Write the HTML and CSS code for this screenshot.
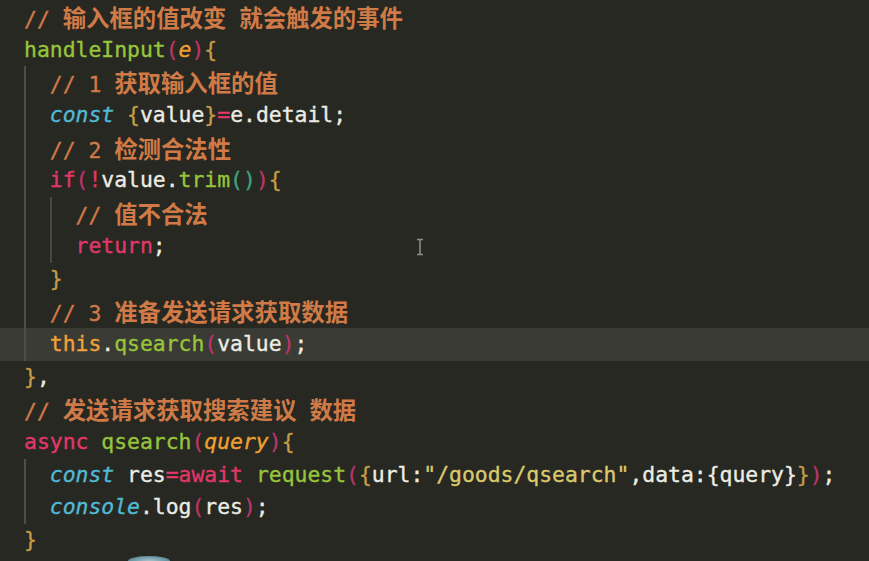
FILE: index.html
```html
<!DOCTYPE html>
<html lang="zh">
<head>
<meta charset="utf-8">
<title>editor</title>
<link rel="stylesheet" href="styles.css">
</head>
<body>
<main class="editor">
  <div class="line"><span class="cm">// <span class="zh">输入框的值改变</span> <span class="zh">就会触发的事件</span></span></div>
  <div class="line"><span class="fn">handleInput</span><span class="pa">(</span><span class="prm">e</span><span class="pa">)</span><span class="br">{</span></div>
  <div class="line g1">  <span class="cm">// 1 <span class="zh">获取输入框的值</span></span></div>
  <div class="line g1">  <span class="st">const</span> <span class="br">{</span><span class="tx">value</span><span class="br">}</span><span class="kw">=</span><span class="tx">e.detail;</span></div>
  <div class="line g1">  <span class="cm">// 2 <span class="zh">检测合法性</span></span></div>
  <div class="line g1">  <span class="kw">if</span><span class="pa">(</span><span class="kw">!</span><span class="tx">value.</span><span class="fn">trim</span><span class="pt">()</span><span class="pa">)</span><span class="br">{</span></div>
  <div class="line g1 g2">    <span class="cm">// <span class="zh">值不合法</span></span></div>
  <div class="line g1 g2">    <span class="kw">return</span><span class="tx">;</span></div>
  <div class="line g1">  <span class="br">}</span></div>
  <div class="line g1">  <span class="cm">// 3 <span class="zh">准备发送请求获取数据</span></span></div>
  <div class="line g1 active">  <span class="th">this</span><span class="tx">.</span><span class="fn">qsearch</span><span class="pa">(</span><span class="tx">value</span><span class="pa">)</span><span class="tx">;</span></div>
  <div class="line"><span class="br">}</span><span class="tx">,</span></div>
  <div class="line"><span class="cm">// <span class="zh">发送请求获取搜索建议</span> <span class="zh">数据</span></span></div>
  <div class="line"><span class="kw">async</span> <span class="fn">qsearch</span><span class="pa">(</span><span class="prm">query</span><span class="pa">)</span><span class="br">{</span></div>
  <div class="line g1">  <span class="st">const</span> <span class="tx">res</span><span class="kw">=await</span> <span class="fn">request</span><span class="pa">(</span><span class="br">{</span><span class="tx">url:</span><span class="s">"/goods/qsearch"</span><span class="tx">,data:{query}</span><span class="br">}</span><span class="pa">)</span><span class="tx">;</span></div>
  <div class="line g1">  <span class="st">console</span><span class="tx">.log</span><span class="pa">(</span><span class="tx">res</span><span class="pa">)</span><span class="tx">;</span></div>
  <div class="line"><span class="br">}</span></div>
</main>
<svg class="ibeam" width="10" height="18" viewBox="0 0 10 18"><path d="M2 1.5h6M5 1.5v15M2 16.5h6" stroke="#8d8d86" stroke-width="1.6" fill="none"/></svg>
<div class="blob"></div>
</body>
</html>
```

FILE: styles.css
```css
html, body {
  margin: 0;
  padding: 0;
  background: #262821;
  overflow: hidden;
}
body {
  width: 869px;
  height: 561px;
  position: relative;
}
.editor {
  padding-top: 1px;
  font-family: "DejaVu Sans Mono", "Liberation Mono", monospace;
  font-size: 21.4px;
  color: #ecece4;
  -webkit-text-stroke: 0.35px currentColor;
}
.line {
  height: 32.7px;
  line-height: 32.7px;
  padding-left: 24px;
  white-space: pre;
}
.line.g1 {
  background-image: linear-gradient(#4d4e47, #4d4e47);
  background-size: 2px 100%;
  background-position: 24px 0;
  background-repeat: no-repeat;
}
.line.g1.g2 {
  background-image: linear-gradient(#4d4e47, #4d4e47), linear-gradient(#474842, #474842);
  background-size: 2px 100%, 2px 100%;
  background-position: 24px 0, 50px 0;
}
.line.active {
  background-color: #3a3b34;
}
.zh {
  font-family: "Noto Sans CJK SC", sans-serif;
  font-size: 23.4px;
  font-weight: 700;
  -webkit-text-stroke: 0;
}
.cm { color: #cf7a47; }
.fn { color: #98c43b; }
.pa { color: #b8356a; }
.pt { color: #3ea47c; }
.br { color: #c59b48; }
.prm { color: #f0a030; font-style: italic; }
.st { color: #52b9d8; font-style: italic; }
.kw { color: #e23769; }
.tx { color: #ecece4; }
.s { color: #dcc86c; }
.th { color: #f3a23a; }
.ibeam {
  position: absolute;
  left: 415px;
  top: 238px;
}
.blob {
  position: absolute;
  left: 128px;
  top: 556px;
  width: 42px;
  height: 5px;
  border-radius: 50% 50% 0 0 / 100% 100% 0 0;
  background: radial-gradient(ellipse at 50% 100%, #a9c4cc 0%, #6d9aa8 55%, #3e6b78 100%);
}
```
